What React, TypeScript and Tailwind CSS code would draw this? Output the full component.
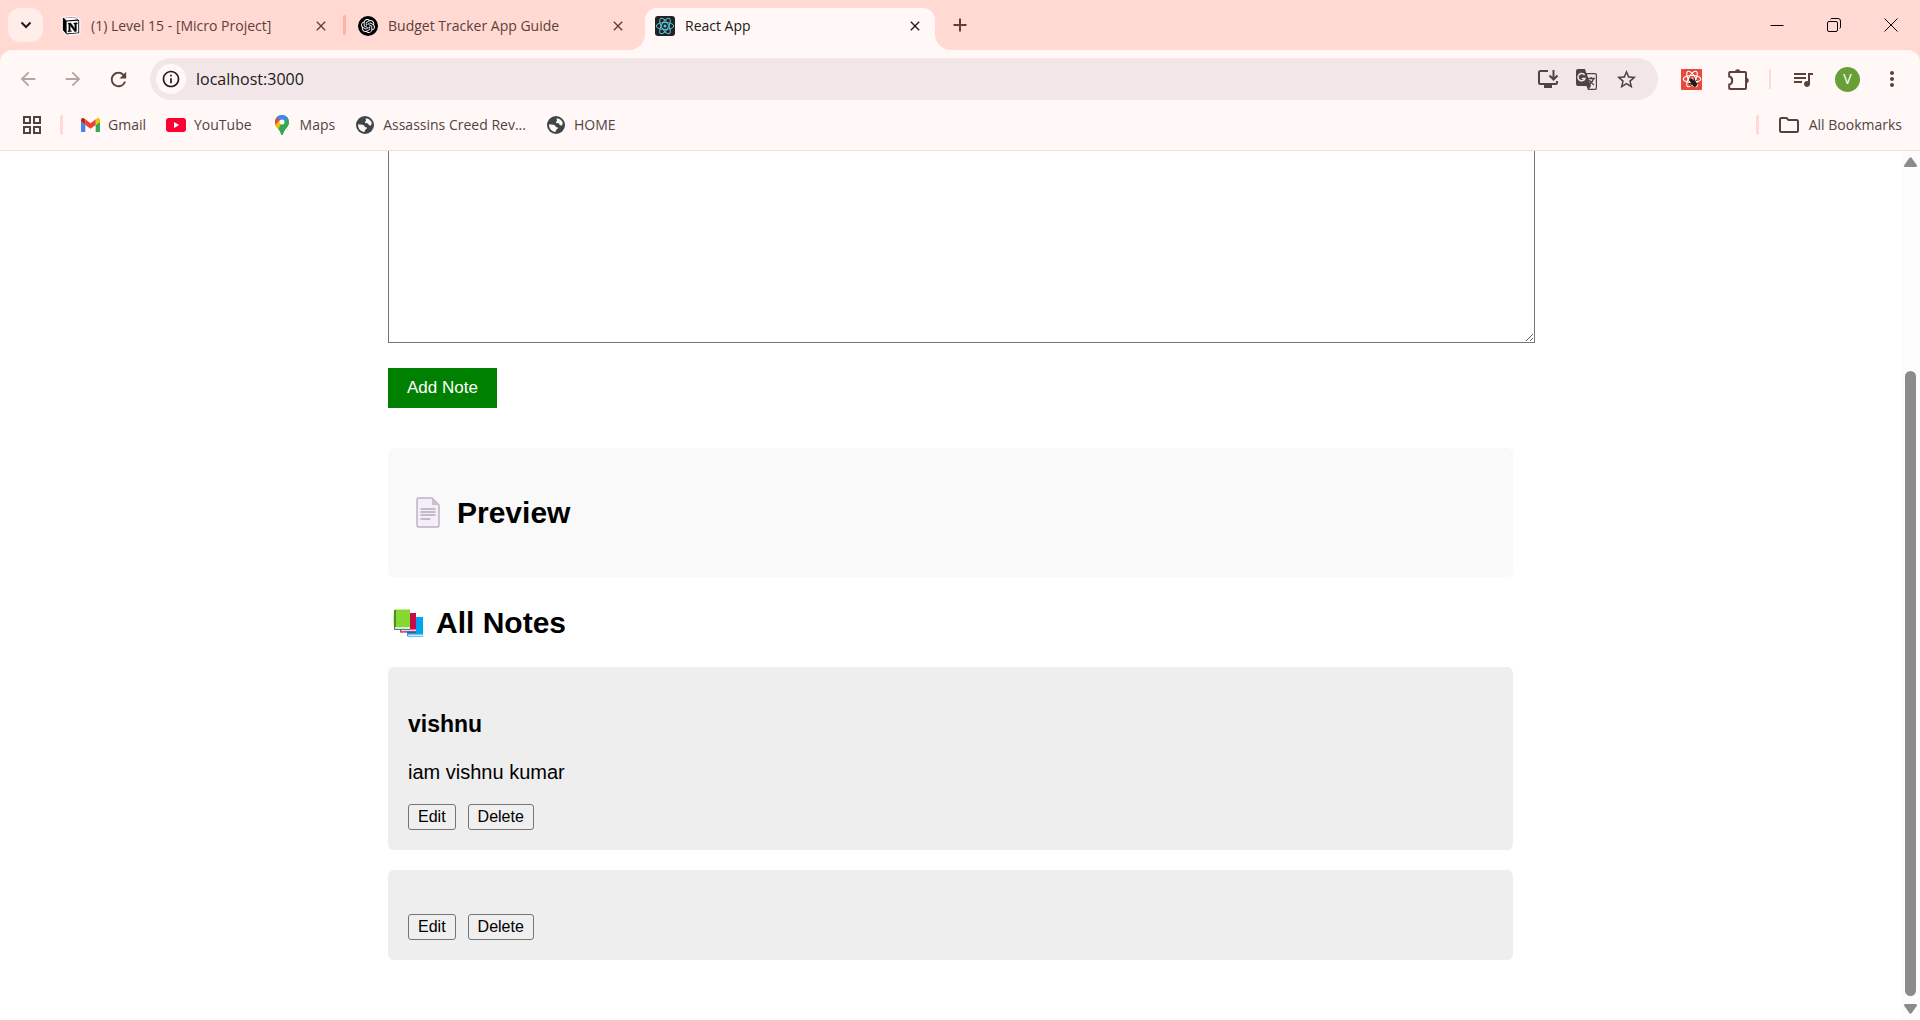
import type { ReactNode } from "react";
import { SiOpenai } from "react-icons/si";
import {
  MdArrowBack,
  MdArrowForward,
  MdClose,
  MdInfoOutline,
  MdMoreVert,
  MdQueueMusic,
  MdRefresh,
  MdStarBorder,
} from "react-icons/md";

const Atom = ({ className, weight = 1 }: { className?: string; weight?: number }) => (
  <svg viewBox="0 0 24 24" className={className} fill="none" stroke="currentColor" strokeWidth={weight}>
    <ellipse cx="12" cy="12" rx="10.5" ry="4.2" />
    <ellipse cx="12" cy="12" rx="10.5" ry="4.2" transform="rotate(60 12 12)" />
    <ellipse cx="12" cy="12" rx="10.5" ry="4.2" transform="rotate(120 12 12)" />
    <circle cx="12" cy="12" r="1.8" fill="currentColor" stroke="none" />
  </svg>
);

const NotionIcon = () => (
  <svg viewBox="0 0 20 20" className="size-5">
    <path d="M1.2 1.500 14 .700l4.800 3.300v13.700L5.500 19.200 1.200 14.500Z" fill="#000" stroke="#fff" strokeWidth="1.200" strokeLinejoin="round" />
    <path d="M2.800 2.200 13.500 1.600l3 2-11 .8Z" fill="#fff" />
    <path d="M5.600 5.600 17.300 4.800v11.700l-11.700.9Z" fill="#fff" />
    <path d="M7 7.300 9.800 7l4 5.800V8.200l-1-.3V7l3.500-.2v.9l-.9.400v7.200l-1.600.4L9.200 9.500v5l1.200.3v.8l-3.500.2v-.8l.9-.4V8.300L7 8.100Z" fill="#000" stroke="#000" strokeWidth=".4" />
  </svg>
);

const GmailIcon = () => (
  <svg viewBox="52 42 88 66" className="w-[19px]">
    <path fill="#4285f4" d="M58 108h14V74L52 59v43c0 3.320 2.690 6 6 6" />
    <path fill="#34a853" d="M120 108h14c3.320 0 6-2.690 6-6V59l-20 15" />
    <path fill="#fbbc04" d="M120 48v26l20-15v-8c0-7.420-8.470-11.650-14.400-7.200" />
    <path fill="#ea4335" d="M72 74V48l24 18 24-18v26L96 92" />
    <path fill="#c5221f" d="M52 51v8l20 15V48l-5.600-4.200c-5.940-4.450-14.400-.22-14.400 7.200" />
  </svg>
);

const YouTubeIcon = () => (
  <svg viewBox="0 0 20 14" className="h-[14px] w-5">
    <rect width="20" height="14" rx="3" fill="#ff0033" />
    <path d="M8 4v6l5.200-3Z" fill="#fff" />
  </svg>
);

const MapsIcon = () => (
  <svg viewBox="0 0 14 20" className="h-5 w-[14px]">
    <defs>
      <clipPath id="map-pin">
        <path d="M7 0a7 7 0 0 1 7 7c0 3.500-2 5.200-3.600 7.200C8.800 16.300 8.300 17.600 8 19a1 1 0 0 1-2 0c-.3-1.400-.8-2.700-2.400-4.800C2 12.200 0 10.500 0 7a7 7 0 0 1 7-7Z" />
      </clipPath>
    </defs>
    <g clipPath="url(#map-pin)">
      <rect width="14" height="20" fill="#34a853" />
      <path d="M0 0h2.500L7 7l-6 6-3-3Z" fill="#ea4335" />
      <path d="M-1 11 5 4.800 9 9l-6 6.500Z" fill="#fbbc04" />
      <path d="m7 7 7-7v20H6L3 14.500Z" fill="#34a853" />
      <path d="M2 0h10l1 2.500L8 8 1.500 2.500Z" fill="#4285f4" />
    </g>
    <circle cx="7" cy="7" r="2.500" fill="#fff" />
  </svg>
);

const GlobeIcon = () => (
  <svg viewBox="0 0 18 18" className="size-[18px] shrink-0">
    <circle cx="9" cy="9" r="9" fill="#3f4548" />
    <path d="M9.800 2.200c2.700.2 4.900 1.900 5.900 4.300l-.5 2.700c-.8.500-1.800.3-2.400-.2-.5-.5-.3-1.300-1-1.500-1.100-.3-2.600 0-2.800-1-.2-.9.800-1.300 1-2 .1-.8-.7-1.400-.2-2.300Z" fill="#fff8f6" />
    <path d="M2 8.300c1.900.6 3.800.1 5.400.8 1 .4.900 1.400 1.700 1.800.8.300 1.800.2 1.900 1.200 0 1-1.200 1.100-1.800 1.800-.5.6-.3 1.500-.8 2.100C4.900 15.900 1.800 12.600 2 8.300Z" fill="#fff8f6" />
  </svg>
);

const InstallIcon = () => (
  <svg viewBox="0 0 20 18" className="h-[18px] w-5" fill="none" stroke="currentColor" strokeWidth="2">
    <path d="M10 1H2.500Q1 1 1 2.500v10Q1 14 2.500 14h15q1.500 0 1.500-1.500V11" />
    <path d="M15.500 0v9M11.500 5.500l4 4 4-4" />
    <path d="M6 16.500h8" strokeWidth="3" />
  </svg>
);

const TranslateIcon = () => (
  <svg viewBox="0 0 21 21" className="size-[21px]">
    <path d="M2 0h7l1.300 4H19q2 0 2 2v13q0 2-2 2h-7l-1.500-4H2q-2 0-2-2V2Q0 0 2 0Z" fill="#51433f" />
    <path d="M10.900 5.200H19q.8 0 .8.800v13q0 .8-.8.800h-6l2-2.800Z" fill="#f2e6e8" />
    <path d="M8.600 6.200A3.600 3.600 0 1 0 9 9.400H5.800" fill="none" stroke="#f2e6e8" strokeWidth="1.500" />
    <path d="M12 9.500h7M15.300 8v1.500M17.500 9.500c-.5 2.500-2 4.500-4 5.800M13.500 11c.8 2 2.500 3.800 4.500 5" fill="none" stroke="#51433f" strokeWidth="1.300" />
  </svg>
);

const PuzzleIcon = () => (
  <svg viewBox="0 0 21 21" className="size-[21px]">
    <path d="M2 3h15q1 0 1 1v15q0 1-1 1H2q-.8 0-.8-.8V15.500c4-.6 4-7.400 0-8V3.800Q1.200 3 2 3Z" fill="none" stroke="currentColor" strokeWidth="2" />
    <path d="M7 3a2.700 2.700 0 0 1 5.400 0ZM18 8.800a2.700 2.700 0 0 1 0 5.400Z" fill="currentColor" />
  </svg>
);

const ReactExtensionIcon = () => (
  <span className="relative grid size-[21px] place-items-center rounded-[1px] bg-[#e8493a] text-white">
    <Atom className="size-[20px]" weight={1.3} />
    <svg viewBox="0 0 12 12" className="absolute right-[3px] bottom-[2px] size-[11px]" stroke="#1c1c1c" strokeWidth="1">
      <ellipse cx="6.500" cy="7" rx="2.200" ry="3.600" transform="rotate(-40 6.500 7)" fill="#1c1c1c" />
      <circle cx="3.500" cy="3.500" r="1.600" fill="#1c1c1c" />
      <path d="M1 7h10M7 1v10M2 10l8-7" />
    </svg>
  </span>
);

const PageIcon = () => (
  <svg viewBox="0 0 24 31" className="h-[31px] w-6">
    <path d="M2.500 1H16l7 7v20.500q0 1.500-1.500 1.500h-19Q1 30 1 28.500v-26Q1 1 2.500 1Z" fill="#f4eef8" stroke="#bdb4c4" strokeWidth="1.500" />
    <path d="M16 1v7h7Z" fill="#c9c0d1" />
    <path d="M4.500 12h15M4.500 15h15M4.500 18h15M4.500 22h10" stroke="#b3a9bb" strokeWidth="1.500" />
  </svg>
);

const BooksIcon = () => (
  <svg viewBox="0 0 31 29" className="h-[29px] w-[31px]">
    <path d="M15 8h15v20H16q-2 0-2-2Z" fill="#00a4ef" />
    <path d="M15 25.500h15v2H16q-1.500-1-1-2Z" fill="#d5e9f5" />
    <path d="M8 4h15v18.500H7Z" fill="#ca0b4a" />
    <path d="M8 20.500h15v2H8Z" fill="#e8d5e0" />
    <path d="M7 23h16" stroke="#990838" />
    <path d="M2 .5h15V19H1Q0 10 1 1.500Z" fill="#86d72f" />
    <path d="M1 1h2v19H1Z" fill="#44911b" />
    <path d="M2 18h15v2H2Z" fill="#d3ede4" />
    <path d="M1 20.500h16" stroke="#3d8b6a" />
  </svg>
);

function Tab({ icon, title, active = false }: { icon: ReactNode; title: string; active?: boolean }) {
  return (
    <div
      className={
        active
          ? "relative flex h-[42px] w-[290px] items-center rounded-t-xl bg-[#fff8f6] pr-3 pb-[7px] pl-[10px] text-[#231917]"
          : "flex h-[42px] w-[290px] items-center pr-3 pb-[7px] pl-[10px] text-[#5d4039]"
      }
    >
      {active && (
        <>
          <svg viewBox="0 0 16 16" className="absolute bottom-0 -left-4 size-4 fill-[#fff8f6]">
            <path d="M16 0v16H0A16 16 0 0 0 16 0" />
          </svg>
          <svg viewBox="0 0 16 16" className="absolute -right-4 bottom-0 size-4 fill-[#fff8f6]">
            <path d="M0 0v16h16A16 16 0 0 1 0 0" />
          </svg>
        </>
      )}
      {icon}
      <span className="ml-[10px] min-w-0 flex-1 truncate">{title}</span>
      <button aria-label={`Close ${title}`} className="grid size-4 place-items-center">
        <MdClose className="size-4" />
      </button>
    </div>
  );
}

function Bookmark({ icon, label }: { icon: ReactNode; label: string }) {
  return (
    <a href="#" className="flex items-center gap-2 whitespace-nowrap">
      <span className="flex size-5 items-center justify-center">{icon}</span>
      {label}
    </a>
  );
}

function NoteActions() {
  return (
    <div className="flex gap-3 text-base leading-5">
      <button className="h-[26px] rounded-[3px] border border-[#767676] bg-[#efefef] px-[9px]">Edit</button>
      <button className="h-[26px] rounded-[3px] border border-[#767676] bg-[#efefef] px-[9px]">Delete</button>
    </div>
  );
}

export default function App() {
  return (
    <div className="flex min-h-screen flex-col bg-white">
      <header className="bg-[#ffd9d2] font-['Open_Sans','Noto_Sans',sans-serif] text-sm text-[#51433f]">
        <div className="flex h-[50px] items-end">
          <button aria-label="Search tabs" className="mb-2 ml-2 grid h-[34px] w-[35px] shrink-0 place-items-center rounded-xl bg-[#ffede9] text-[#231917]">
            <svg viewBox="0 0 12 8" className="h-2 w-3" fill="none" stroke="currentColor" strokeWidth="2">
              <path d="m1.500 1.500 4.500 4.500 4.500-4.500" />
            </svg>
          </button>
          <div className="ml-2 flex items-end">
            <Tab icon={<NotionIcon />} title="(1) Level 15 - [Micro Project]" />
            <span className="mx-[2px] mb-[15px] h-5 w-[3px] rounded-full bg-[#ffb4a6]" />
            <Tab
              icon={
                <span className="grid size-5 place-items-center rounded-full bg-black text-white">
                  <SiOpenai className="size-[14px]" />
                </span>
              }
              title="Budget Tracker App Guide"
            />
            <span className="w-[7px]" />
            <Tab
              active
              icon={
                <span className="grid size-5 place-items-center rounded-[3px] bg-[#222] text-[#58c4dc]">
                  <Atom className="size-5" weight={1.2} />
                </span>
              }
              title="React App"
            />
          </div>
          <button aria-label="New tab" className="mb-[18px] ml-[18px] text-[#5d4039]">
            <svg viewBox="0 0 14 14" className="size-[14px]" stroke="currentColor" strokeWidth="2">
              <path d="M7 .5v13M.5 7h13" />
            </svg>
          </button>
          <div className="mb-[18px] ml-auto flex gap-[43px] pr-[22px] text-black">
            <button aria-label="Minimize">
              <svg viewBox="0 0 14 14" className="size-[14px]" stroke="currentColor"><path d="M.5 7.500h13" /></svg>
            </button>
            <button aria-label="Restore">
              <svg viewBox="0 0 14 14" className="size-[14px]" fill="none" stroke="currentColor">
                <rect x=".5" y="3.500" width="10" height="10" rx="1.500" />
                <path d="M3.500 1.200Q4 .5 5 .5h6Q13.500.500 13.500 3v6q0 1-.8 1.500" />
              </svg>
            </button>
            <button aria-label="Close window">
              <svg viewBox="0 0 14 14" className="size-[14px]" stroke="currentColor"><path d="m.5.500 13 13m0-13-13 13" /></svg>
            </button>
          </div>
        </div>

        <div className="rounded-t-xl border-b border-[#f5ddd8] bg-[#fff8f6]">
          <div className="flex h-[58px] items-center pr-4 pl-[17px] text-[#5d4039]">
            <div className="flex items-center gap-[23px]">
              <button aria-label="Back" className="text-[#b5a4a0]"><MdArrowBack className="size-[22px]" /></button>
              <button aria-label="Forward" className="text-[#b5a4a0]"><MdArrowForward className="size-[22px]" /></button>
              <button aria-label="Reload"><MdRefresh className="size-[23px]" /></button>
            </div>
            <div className="ml-5 flex h-[42px] flex-1 items-center rounded-full bg-[#f2e6e8] pr-5 pl-[6px]">
              <button aria-label="Site information" className="grid size-[30px] place-items-center rounded-full bg-[#fff8f6] text-[#231917]">
                <MdInfoOutline className="size-5" />
              </button>
              <input aria-label="Address" defaultValue="localhost:3000" className="ml-[10px] min-w-0 flex-1 bg-transparent text-base text-[#231917] outline-none" />
              <div className="flex items-center gap-[18px] text-[#51433f]">
                <button aria-label="Install app"><InstallIcon /></button>
                <button aria-label="Translate page"><TranslateIcon /></button>
                <button aria-label="Bookmark page"><MdStarBorder className="size-[23px]" /></button>
              </div>
            </div>
            <div className="ml-[23px] flex items-center">
              <button aria-label="React Developer Tools"><ReactExtensionIcon /></button>
              <button aria-label="Extensions" className="ml-[26px]"><PuzzleIcon /></button>
              <span className="ml-5 h-5 w-[2px] bg-[#ffd9d2]" />
              <button aria-label="Media controls" className="ml-5"><MdQueueMusic className="size-6" /></button>
              <button aria-label="Profile" className="ml-5 grid size-[25px] place-items-center rounded-full bg-[#689f38] text-sm text-white">V</button>
              <button aria-label="Menu" className="ml-5"><MdMoreVert className="size-6" /></button>
            </div>
          </div>

          <nav aria-label="Bookmarks" className="flex h-[42px] items-center pr-[18px] pb-2 pl-[23px]">
            <button aria-label="Apps">
              <svg viewBox="0 0 18 18" className="size-[18px]" fill="none" stroke="currentColor" strokeWidth="2">
                <path d="M1 1h6v6H1ZM11 1h6v6h-6ZM1 11h6v6H1ZM11 11h6v6h-6Z" />
              </svg>
            </button>
            <span className="mr-[17px] ml-[19px] h-5 w-[3px] rounded-full bg-[#ffd9d2]" />
            <div className="flex items-center gap-5">
              <Bookmark icon={<GmailIcon />} label="Gmail" />
              <Bookmark icon={<YouTubeIcon />} label="YouTube" />
              <Bookmark icon={<MapsIcon />} label="Maps" />
              <Bookmark icon={<GlobeIcon />} label="Assassins Creed Rev..." />
              <Bookmark icon={<GlobeIcon />} label="HOME" />
            </div>
            <span className="mr-5 ml-auto h-5 w-[3px] rounded-full bg-[#ffd9d2]" />
            <button className="flex items-center gap-[10px]">
              <svg viewBox="0 0 20 16" className="h-4 w-5" fill="none" stroke="currentColor" strokeWidth="2">
                <path d="M1 2.500Q1 1 2.500 1H7.500L9.500 3h8Q19 3 19 4.500v9q0 1.500-1.500 1.500h-15Q1 15 1 13.500Z" />
              </svg>
              All Bookmarks
            </button>
          </nav>
        </div>
      </header>

      <div className="flex flex-1">
        <main className="min-w-0 flex-1 font-['Liberation_Sans',Arial,sans-serif] text-xl leading-[23px] text-black">
          <div className="mx-auto max-w-[1125px]">
            <textarea aria-label="Note" className="block h-48 w-[calc(100%+22px)] border border-t-0 border-[#767676] bg-white" />
            <button className="mt-[25px] h-10 bg-[#008000] px-[19px] text-[17px] leading-5 text-white">Add Note</button>
            <section className="mt-10 rounded-md bg-[#f9f9f9] px-7 py-12">
              <h2 className="flex items-center gap-[17px] text-3xl leading-[33px] font-bold">
                <PageIcon />
                Preview
              </h2>
            </section>
            <h2 className="mt-7 mb-[26px] flex items-center gap-3 pl-[5px] text-3xl leading-9 font-bold">
              <BooksIcon />
              All Notes
            </h2>
            <article className="rounded-md bg-[#eee] p-5">
              <h3 className="mt-6 text-[23px] leading-[26px] font-bold">vishnu</h3>
              <p className="mt-6 mb-5">iam vishnu kumar</p>
              <NoteActions />
            </article>
            <article className="mt-5 rounded-md bg-[#eee] px-5 pt-11 pb-5">
              <NoteActions />
            </article>
          </div>
        </main>
        <div aria-hidden="true" className="flex w-[19px] flex-col items-center bg-[#fcfcfc] py-[6px]">
          <svg viewBox="0 0 13 10" className="h-[10px] w-[13px] shrink-0 fill-[#8b8b8b]">
            <path d="M5.300 1Q6.500-.5 7.700 1l5 7q.8 2-1 2H1.300q-1.800 0-1-2Z" />
          </svg>
          <span className="flex-[204]" />
          <span className="w-[11px] flex-[626] rounded-full bg-[#8b8b8b]" />
          <svg viewBox="0 0 13 10" className="mt-2 h-[10px] w-[13px] shrink-0 fill-[#8b8b8b]">
            <path d="M5.300 9Q6.500 10.500 7.700 9l5-7q.8-2-1-2H1.300q-1.800 0-1 2Z" />
          </svg>
        </div>
      </div>
    </div>
  );
}
